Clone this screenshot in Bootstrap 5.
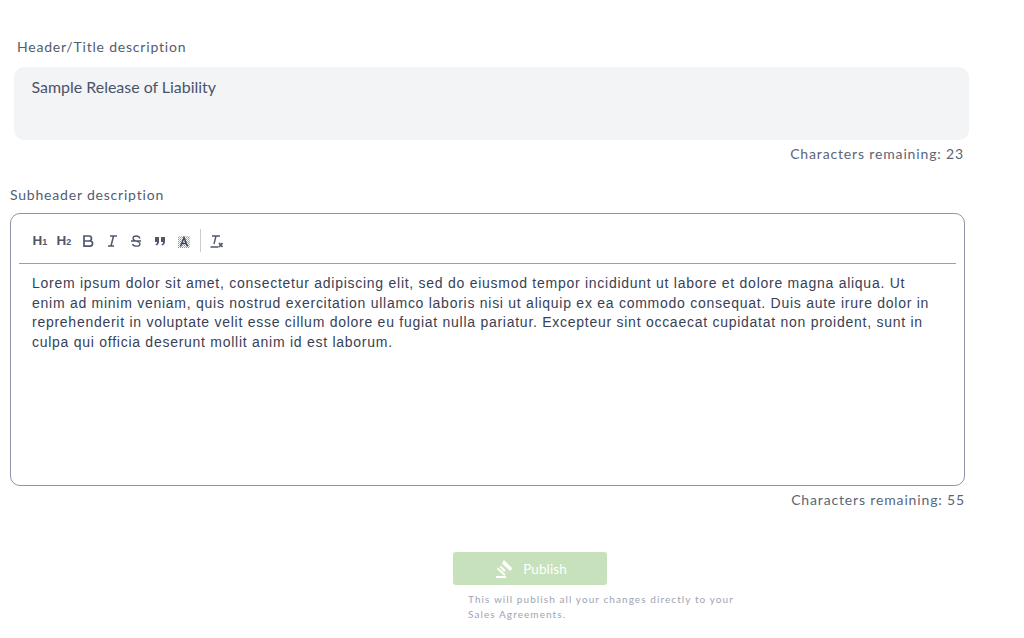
<!DOCTYPE html>
<html lang="en"><head><meta charset="utf-8"><title>Publish</title>
<link href="https://cdn.jsdelivr.net/npm/bootstrap@5.3.0/dist/css/bootstrap.min.css" rel="stylesheet">
<style>
html,body{height:638px;overflow:hidden;background:#fff}
body{font-family:"Lato","Noto Sans",sans-serif;color:#4a5368}
.page-wrap{width:969px;padding:38px 0 0 10px}
.field-label{font-size:14px;line-height:18px;letter-spacing:.8px;color:#525c72;margin:0}
.title-label{padding-left:7px}
.title-box{margin:11px 0 0 4px;width:955px;height:73px;background:#f3f4f6;border-radius:10px;padding:10px 17.500px;font-size:15.950px;line-height:20px;color:#4a5368}
.char-count{width:955px;font-size:14px;line-height:18px;letter-spacing:.85px;color:#5b6579;text-align:right;margin:0}
.count-one{margin:5px 0 0 0;padding-right:1px}
.sub-label{margin-top:23px}
.editor-box{width:955px;height:273px;margin-top:9px;border:1px solid #8d94a5;border-radius:10px;padding:0 8px}
.tool-row{height:50px;border-bottom:1px solid #9a9fac;padding:4px 0 0 13px;color:#4a5368}
.tool-row svg{display:block}
.tool-btn{width:16px;height:16px;font:700 13.500px/16px "Liberation Sans",sans-serif;text-align:center;color:#4f586d}
.tool-btn sub{font-size:9px;bottom:-.05em;line-height:0}
.tool-sep{width:1px;height:23px;background:#c9ccd4}
.editor-text{padding:10px 0 0 13px;width:917px;font:14px/19.500px "Liberation Sans",sans-serif;letter-spacing:.735px;color:#384155;margin:0}
.count-two{margin-top:5px}
.publish-area{padding-left:443px;margin-top:43px}
.publish-btn{width:154px;height:33px;background:#c7e1bc;border:0;border-radius:3px;color:#fff;font-size:13.500px;letter-spacing:.1px;padding:1px 0 0 2px}
.publish-btn:disabled{opacity:1;background:#c7e1bc;color:#fff}
.publish-note{width:275px;margin:7px 0 0 15px;font-size:10px;line-height:15px;letter-spacing:1.080px;color:#9ea3b1}
</style></head>
<body>
<main class="page-wrap">
  <p class="field-label title-label">Header/Title description</p>
  <div class="title-box">Sample Release of Liability</div>
  <p class="char-count count-one">Characters remaining: 23</p>
  <p class="field-label sub-label">Subheader description</p>
  <div class="editor-box">
    <div class="tool-row d-flex align-items-center">
      <div class="tool-btn me-2">H<sub>1</sub></div>
      <div class="tool-btn me-2">H<sub>2</sub></div>
      <svg class="me-2" width="16" height="16" viewBox="0 0 16 16" fill="none" stroke="#4f586d" stroke-width="1.700"><path d="M4 3h5a2.500 2.500 0 0 1 0 5H4zM4 8h6a2.600 2.600 0 0 1 0 5.200H4z"/></svg>
      <svg class="me-2" width="16" height="16" viewBox="0 0 16 16" fill="none" stroke="#4f586d" stroke-width="1.500"><path d="M6 3h7M4 13h6M9.500 3 7 13"/></svg>
      <svg class="me-2" width="16" height="16" viewBox="0 0 16 16" fill="none" stroke="#4f586d" stroke-width="1.300"><path d="M12 5.500C11.500 4 10 3 8.300 3 6.500 3 5 4 5 5.500c0 3 7 2.500 7 5.500 0 1.400-1.700 2.200-3.500 2.200-1.900 0-3.500-.8-4-2.200M3 8h10"/></svg>
      <svg class="me-2" width="16" height="16" viewBox="0 0 16 16" fill="#4f586d"><path d="M3 4h4v4.500C7 10.500 6 12 4 12.500l-.5-1.200C4.500 11 5 10.300 5 9H3zM9 4h4v4.500c0 2-1 3.500-3 4l-.5-1.200c1-.3 1.500-1 1.500-2.300H9z"/></svg>
      <svg class="me-2" width="16" height="16" viewBox="0 0 16 16"><defs><pattern id="dots" width="2" height="2" patternUnits="userSpaceOnUse"><rect width="1" height="1" fill="#8c93a5"/><rect x="1" y="1" width="1" height="1" fill="#b4b9c5"/></pattern></defs><rect x="2" y="3" width="12" height="12" fill="url(#dots)"/><path d="M4.500 13.500 8 4.500l3.500 9M5.800 10.500h4.400" fill="none" stroke="#3f485c" stroke-width="1.500"/></svg>
      <div class="tool-sep me-2"></div>
      <svg width="16" height="16" viewBox="0 0 16 16" fill="none" stroke="#4f586d" stroke-width="1.400"><path d="M3 3h8M7 3 5 11M1.500 14h8"/><path d="m10 10 3.500 4M13.500 10 10 14" stroke-width="1.700"/></svg>
    </div>
    <p class="editor-text">Lorem ipsum dolor sit amet, consectetur adipiscing elit, sed do eiusmod tempor incididunt ut labore et dolore magna aliqua. Ut enim ad minim veniam, quis nostrud exercitation ullamco laboris nisi ut aliquip ex ea commodo consequat. Duis aute irure dolor in reprehenderit in voluptate velit esse cillum dolore eu fugiat nulla pariatur. Excepteur sint occaecat cupidatat non proident, sunt in culpa qui officia deserunt mollit anim id est laborum.</p>
  </div>
  <p class="char-count count-two">Characters remaining: 55</p>
  <div class="publish-area">
    <button class="btn publish-btn d-flex align-items-center justify-content-center gap-2" disabled type="button">
      <svg width="20" height="20" viewBox="0 0 20 20" fill="#fff"><path d="m9 1 8.500 8.500-2.500 2.500-3-3L9 6.500 6.800 4.200z"/><path d="M6 6.500 11 11.500 9 13 4.500 8z" opacity=".9"/><path d="m3 8.500 7.500 7-1.300 1.300L1.800 10zM1 17h10v2H1z"/></svg>
      <span>Publish</span>
    </button>
    <p class="publish-note">This will publish all your changes directly to your Sales Agreements.</p>
  </div>
</main>
<script src="https://cdn.jsdelivr.net/npm/bootstrap@5.3.0/dist/js/bootstrap.bundle.min.js"></script>
</body></html>
